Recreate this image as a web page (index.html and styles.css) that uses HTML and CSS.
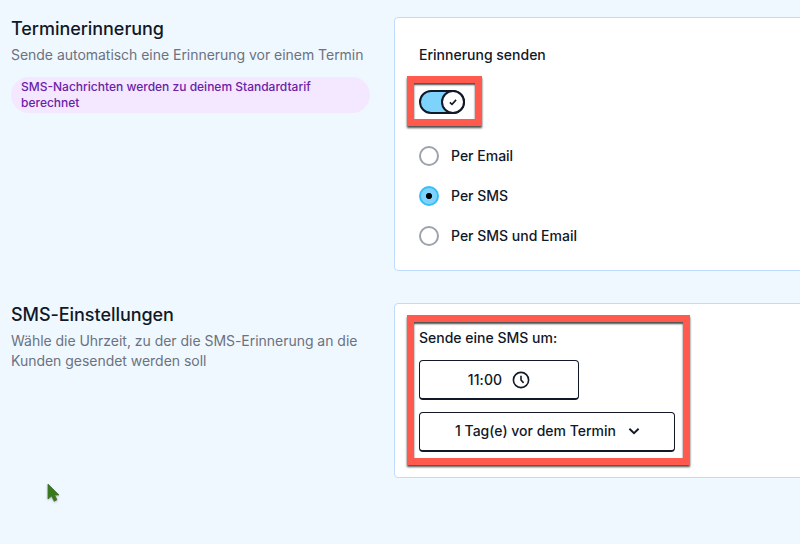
FILE: index.html
```html
<!DOCTYPE html>
<html lang="de">
<head>
	<meta charset="UTF-8">
	<title>Terminerinnerung</title>
	<link rel="stylesheet" href="styles.css">
</head>
<body>
	<div class="section reminder">
		<div class="section-info">
			<h2>Terminerinnerung</h2>
			<p>Sende automatisch eine Erinnerung vor einem Termin</p>
			<div class="badge">SMS-Nachrichten werden zu deinem Standardtarif berechnet</div>
		</div>
		<div class="card">
			<div class="card-title">Erinnerung senden</div>
			<div class="toggle">
				<span class="toggle-knob">
					<svg width="10" height="10" viewBox="0 0 10 10"><path d="M1.8 5.3L4 7.3L8.1 2.9"/></svg>
				</span>
			</div>
			<div class="radio-list">
				<label class="radio"><input type="radio" name="type">Per Email</label>
				<label class="radio"><input type="radio" name="type" checked>Per SMS</label>
				<label class="radio"><input type="radio" name="type">Per SMS und Email</label>
			</div>
			<div class="mark mark-toggle"></div>
		</div>
	</div>

	<div class="section sms">
		<div class="section-info">
			<h2>SMS-Einstellungen</h2>
			<p>Wähle die Uhrzeit, zu der die SMS-Erinnerung an die Kunden gesendet werden soll</p>
		</div>
		<div class="card">
			<div class="card-title">Sende eine SMS um:</div>
			<button class="btn btn-time">
				<span>11:00</span>
				<svg width="18" height="18" viewBox="0 0 18 18"><circle cx="9" cy="9" r="7.6"/><path d="M9 4.8V9L11.6 11.9"/></svg>
			</button>
			<button class="btn btn-day">
				<span>1 Tag(e) vor dem Termin</span>
				<svg width="12" height="12" viewBox="0 0 12 12"><path d="M1.4 3.8L6 8.2L10.6 3.8"/></svg>
			</button>
			<div class="mark mark-sms"></div>
		</div>
	</div>

	<!-- Mauszeiger -->
	<svg class="cursor" width="16" height="22" viewBox="0 0 16 22"><path d="M1 1V16L4.6 13L7.2 18.2L10 16.8L7.6 12H12Z"/></svg>
</body>
</html>
```

FILE: styles.css
```css
* {
	box-sizing: border-box;
}
body {
	margin: 0;
	padding-top: 17px;
	height: 544px;
	overflow: hidden;
	background-color: #f0f8ff;
	color: #111827;
	font-family: Inter, "Liberation Sans", sans-serif;
	font-size: 14px;
	line-height: 20px;
}
h2, p {
	margin: 0;
}
h2 {
	font-size: 18px;
	font-weight: 500;
	line-height: 24px;
	letter-spacing: -.05px;
}
p {
	margin-top: 4px;
	color: #6b7280;
	letter-spacing: -.03px;
}
.section {
	display: flex;
	width: 840px;
	padding-left: 11px;
}
.section-info {
	width: 359px;
	margin-right: 24px;
}
.reminder {
	height: 254px;
	margin-bottom: 32px;
}
.sms {
	height: 175px;
}
.badge {
	margin-top: 12px;
	padding: 2px 10px;
	border-radius: 18px;
	background-color: #f3e8ff;
	color: #6b21a8;
	font-size: 12px;
	font-weight: 500;
	line-height: 16px;
}
.card {
	position: relative;
	flex: 1;
	padding: 27px 24px 0 24px;
	border: 1px solid #bfdbfe;
	border-radius: 4px;
	background-color: #fff;
	font-weight: 500;
}
.sms .card {
	padding-top: 24px;
}
.toggle {
	display: flex;
	justify-content: flex-end;
	width: 46px;
	height: 24px;
	margin-top: 25px;
	border: 2px solid #111827;
	border-radius: 12px;
	background-color: #7dd3fc;
}
.toggle-knob {
	display: flex;
	align-items: center;
	justify-content: center;
	width: 24px;
	height: 24px;
	margin: -2px -2px 0 0;
	border: 2px solid #111827;
	border-radius: 50%;
	background-color: #fff;
}
svg {
	fill: none;
	stroke: #111827;
	stroke-width: 1.6;
}
.radio-list {
	display: flex;
	flex-direction: column;
	gap: 20px;
	margin-top: 32px;
}
.radio {
	display: flex;
	align-items: center;
	height: 20px;
}
.radio input {
	appearance: none;
	width: 20px;
	height: 20px;
	margin: 0 12px 0 0;
	border: 2px solid #9ca3af;
	border-radius: 50%;
	background-color: #fff;
}
.radio input:checked {
	border-color: #38bdf8;
	background: radial-gradient(circle, #000 2.7px, #7dd3fc 3.5px);
}
.btn {
	display: flex;
	align-items: center;
	justify-content: center;
	height: 40px;
	padding: 0;
	border: 1px solid #111827;
	border-bottom-width: 2px;
	border-radius: 4px;
	background-color: #fff;
	color: #111827;
	font: inherit;
}
.btn-time {
	width: 160px;
	gap: 10px;
	margin-top: 12px;
}
.btn-time span {
	letter-spacing: .1px;
}
.btn-day {
	width: 256px;
	gap: 12px;
	margin-top: 12px;
	padding: 0 0 2px 1px;
}
.btn-day svg {
	stroke-width: 1.9;
}
/* rote Markierungen ueber den Feldern */
.mark {
	position: absolute;
	left: 12px;
	border: 7px solid #ff5a4d;
	box-shadow: 0 2px 2px rgba(0, 0, 0, .7), inset 0 2px 2px rgba(0, 0, 0, .7);
	pointer-events: none;
}
.mark-toggle {
	top: 58px;
	width: 75px;
	height: 50px;
}
.mark-sms {
	top: 11px;
	width: 283px;
	height: 150px;
}
.cursor {
	position: absolute;
	left: 47px;
	top: 483px;
	fill: #347c17;
	stroke: #4b6b3c;
	stroke-width: .8;
	filter: drop-shadow(0 1px 1px rgba(0, 0, 0, .25));
}
```
